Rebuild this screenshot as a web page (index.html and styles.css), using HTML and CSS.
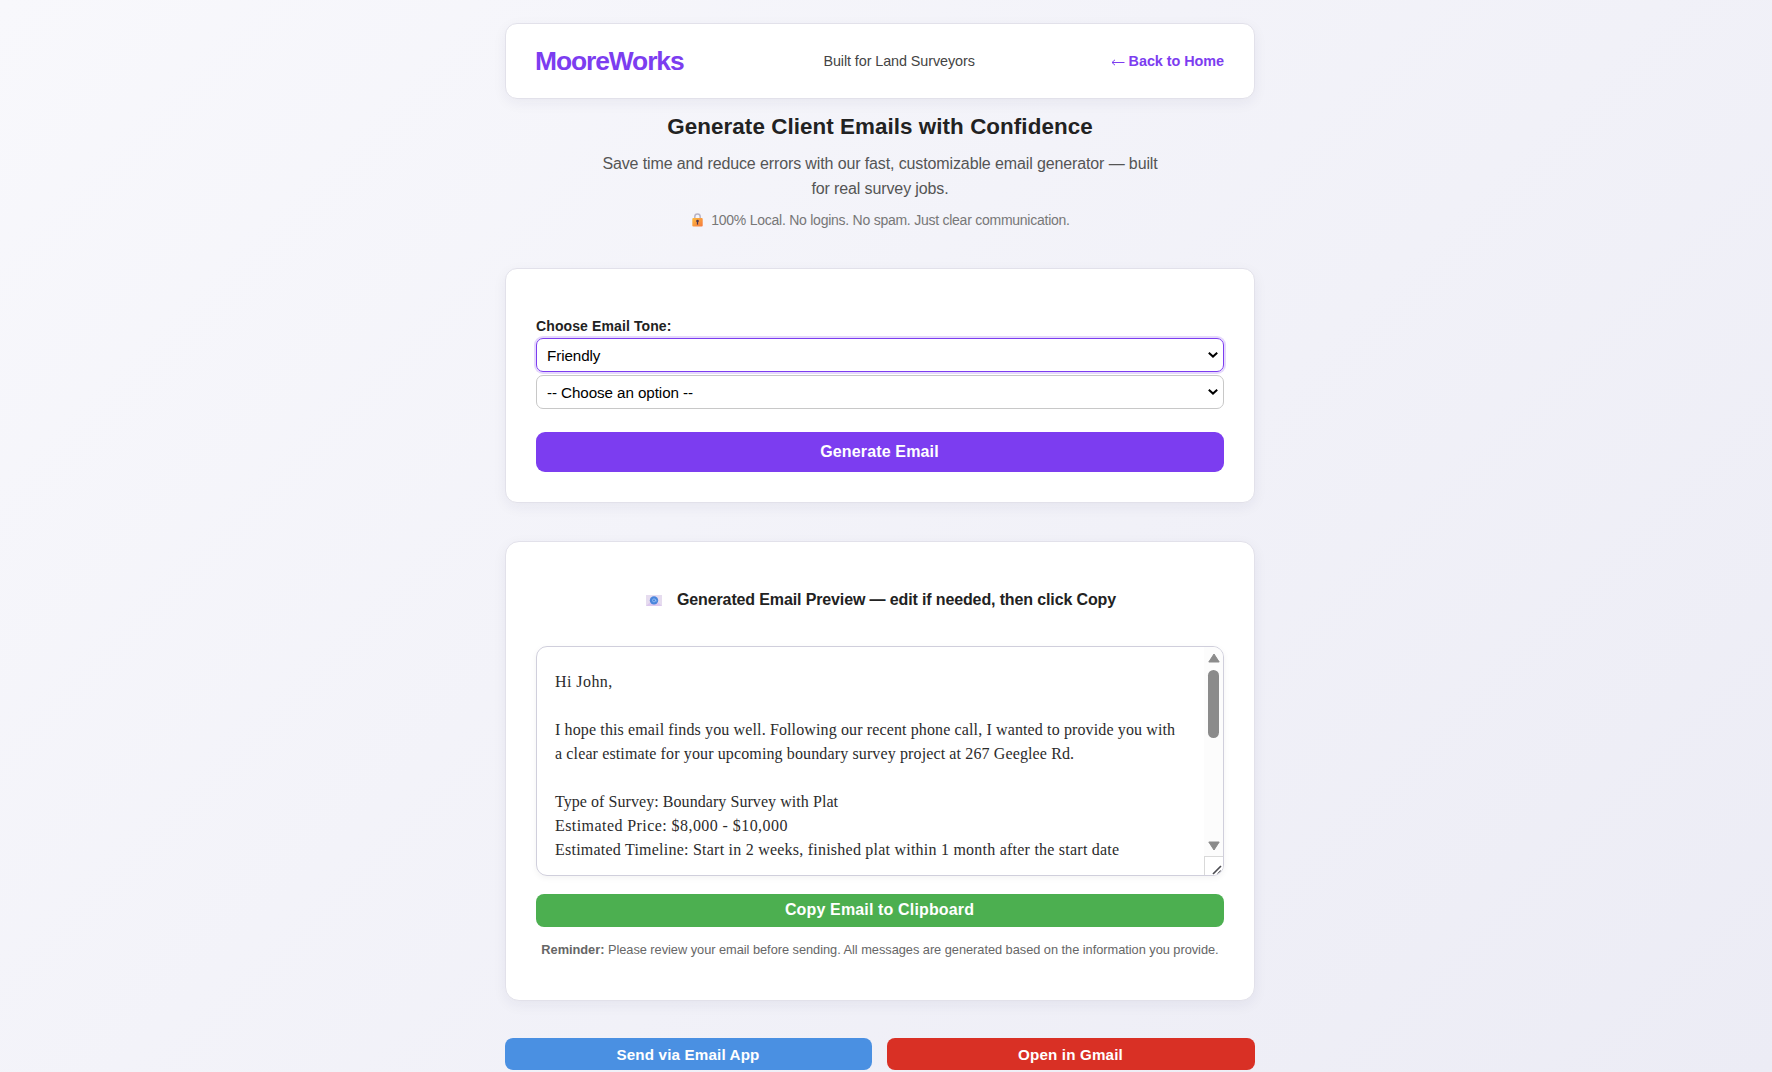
FILE: index.html
```html
<!DOCTYPE html>
<html lang="en">
<head>
<meta charset="utf-8">
<title>MooreWorks</title>
<link rel="stylesheet" href="styles.css">
</head>
<body>
<main class="page">
  <header class="card topbar">
    <div class="brand">MooreWorks</div>
    <div class="tagline">Built for Land Surveyors</div>
    <a class="back" href="#"><svg class="back-arrow" viewBox="0 0 14 7"><path d="M13.500 3.500H1M4 .8 1 3.500l3 2.700" fill="none" stroke="#7c3df0" stroke-width="1"/></svg>Back to Home</a>
  </header>
  <section class="hero">
    <h1>Generate Client Emails with Confidence</h1>
    <p class="lead">Save time and reduce errors with our fast, customizable email generator — built<br>for real survey jobs.</p>
    <p class="note">
      <svg class="lock" viewBox="0 0 11 14"><defs><linearGradient id="g" x1="0" y1="0" x2="1" y2="1"><stop offset="0" stop-color="#fdbb3f"/><stop offset="1" stop-color="#f5793f"/></linearGradient></defs><path d="M2.8 6V3.8a2.7 2.7 0 0 1 5.400 0V6" fill="none" stroke="#b9b3c4" stroke-width="1.500"/><rect x="0.300" y="5" width="10.400" height="8.600" rx="1" fill="url(#g)"/><circle cx="5.500" cy="8" r="1.300" fill="#4b3550"/><path d="M5.500 8v3.600" stroke="#4b3550" stroke-width="1.200"/></svg>
      100% Local. No logins. No spam. Just clear communication.
    </p>
  </section>
  <section class="card form">
    <label class="label">Choose Email Tone:</label>
    <div class="select focused">Friendly<svg class="chev" viewBox="0 0 10 6"><path d="M.8.8 5 4.600 9.200.8" fill="none" stroke="#000" stroke-width="2"/></svg></div>
    <div class="select">-- Choose an option --<svg class="chev" viewBox="0 0 10 6"><path d="M.8.8 5 4.600 9.200.8" fill="none" stroke="#000" stroke-width="2"/></svg></div>
    <button class="btn generate">Generate Email</button>
  </section>
  <section class="card preview">
    <h2><svg class="mail" viewBox="0 0 16 11"><rect width="16" height="11" fill="#e6dcef"/><path d="M0 11 6 5.500h4L16 11Z" fill="#dcc8ee"/><circle cx="8" cy="5.400" r="4.200" fill="#4a86dc"/><circle cx="8" cy="5.400" r="1.500" fill="none" stroke="#9cc3f5" stroke-width=".8"/><path d="M9.500 4.500v1.500q1 .8 1.300-.6" fill="none" stroke="#9cc3f5" stroke-width=".7"/></svg>Generated Email Preview — edit if needed, then click Copy</h2>
    <div class="editor">
      <div class="message"><span class="figures">Hi John,</span>

I hope this email finds you well. Following our recent phone call, I wanted to provide you with
a clear estimate for your upcoming boundary survey project at 267 Geeglee Rd.

<span class="tight">Type of Survey: Boundary Survey with Plat</span>
<span class="figures">Estimated Price: $8,000 - $10,000</span>
<span class="loose">Estimated Timeline: Start in 2 weeks, finished plat within 1 month after the start date</span></div>
      <div class="scroll">
        <svg class="arrow" viewBox="0 0 12 10"><path d="M6 1 11.200 9H.8Z" fill="#8b8b8b" stroke="#8b8b8b" stroke-linejoin="round"/></svg>
        <div class="thumb"></div>
        <svg class="arrow down" viewBox="0 0 12 10"><path d="M6 9 11.200 1H.8Z" fill="#8b8b8b" stroke="#8b8b8b" stroke-linejoin="round"/></svg>
        <div class="grip"><svg viewBox="0 0 10 10"><path d="M1 9 9 1M5.800 9 9 5.800" stroke="#4c4c52" stroke-width="1.700" fill="none"/></svg></div>
      </div>
    </div>
    <button class="btn copy">Copy Email to Clipboard</button>
    <p class="reminder"><b>Reminder:</b> Please review your email before sending. All messages are generated based on the information you provide.</p>
  </section>
  <div class="actions">
    <button class="btn send">Send via Email App</button>
    <button class="btn gmail">Open in Gmail</button>
  </div>
</main>
</body>
</html>
```

FILE: styles.css
```css
* { box-sizing: border-box; }
html { height: 100%; overflow: hidden; }
body {
  margin: 0;
  height: 1072px;
  overflow: hidden;
  padding: 23px 12px 0 0;
  font-family: "Liberation Sans", Arial, sans-serif;
  color: #222;
  background: linear-gradient(135deg, #f8f8fc, #ececf5);
}
h1, h2, p { margin: 0; }
.page { width: 750px; margin: 0 auto; }
.card {
  background: #fff;
  border: 1px solid #e2e1ea;
  border-radius: 12px;
  box-shadow: 0 4px 14px rgba(40, 30, 80, .06);
}
.topbar {
  height: 76px;
  padding: 0 30px 0 29px;
  display: flex;
  align-items: center;
  justify-content: space-between;
}
.brand { font-size: 26.4px; font-weight: 700; letter-spacing: -1.08px; color: #7c3df0; }
.tagline { margin-left: 4px; font-size: 14.4px; letter-spacing: -.09px; color: #444; }
.back { display: flex; align-items: center; gap: 4px; font-size: 14.4px; letter-spacing: -.05px; font-weight: 700; color: #7c3df0; text-decoration: none; }
.back-arrow { width: 14px; height: 7px; margin-top: 3px; }
.hero { height: 169px; text-align: center; padding-top: 14px; }
h1 { font-size: 22.4px; line-height: 28px; letter-spacing: .06px; }
.lead { margin-top: 10px; font-size: 16px; line-height: 25px; letter-spacing: -.12px; color: #555; }
.note { display: flex; align-items: center; justify-content: center; gap: 8px; margin-top: 9px; padding-left: 2px; font-size: 14px; line-height: 20px; letter-spacing: -.25px; color: #777; }
.lock { width: 11px; height: 14px; }
.form { height: 235px; padding: 48px 30px 0; }
.label { display: block; height: 21px; font-size: 14px; line-height: 19px; letter-spacing: .11px; font-weight: 700; }
.select {
  display: flex;
  align-items: center;
  justify-content: space-between;
  height: 34px;
  margin-bottom: 3px;
  padding: 0 5px 0 10px;
  border: 1px solid #c8c8c8;
  border-radius: 7px;
  font-size: 15.2px;
  letter-spacing: -.08px;
  color: #000;
}
.focused { border-color: #7c3df0; box-shadow: 0 0 0 2px #e5d8fc; }
.chev { width: 10px; height: 6px; }
.btn { display: block; width: 100%; border: 0; padding: 0 1px 0 0; border-radius: 8px; color: #fff; font: 700 16px "Liberation Sans", Arial, sans-serif; letter-spacing: .15px; }
.generate { height: 40px; margin-top: 23px; border-radius: 9px; background: #7c3df0; }
.preview { height: 460px; margin-top: 38px; padding: 46px 30px 0; border-radius: 14px; }
h2 { display: flex; align-items: center; justify-content: center; gap: 15px; padding-left: 2px; font-size: 16px; line-height: 24px; letter-spacing: -.13px; }
.mail { width: 16px; height: 11px; }
.editor { display: flex; height: 230px; margin-top: 34px; border: 1px solid #d0cfdc; border-radius: 11px; box-shadow: 0 2px 6px rgba(0, 0, 0, .05); overflow: hidden; }
.message { flex: 1; padding: 23px 0 0 18px; white-space: pre; color: #2b2b2b; font: 16px/24px Georgia, "Liberation Serif", serif; letter-spacing: .125px; }
.tight { letter-spacing: .06px; }
.loose { letter-spacing: .23px; }
.figures { letter-spacing: .43px; }
.scroll { width: 19px; display: flex; flex-direction: column; align-items: center; background: #fcfcfc; padding-top: 6px; }
.arrow { width: 12px; height: 10px; }
.thumb { width: 11px; height: 68px; margin-top: 7px; border-radius: 6px; background: #8b8b8b; }
.down { margin-top: auto; }
.grip { width: 19px; height: 19px; margin-top: 5px; padding: 8px 0 0 7px; border: 1px solid #d9d9d9; border-width: 1px 0 0 1px; background: #fff; }
.grip svg { display: block; width: 10px; height: 10px; }
.copy { height: 33px; margin-top: 18px; padding-bottom: 2px; background: #4caf50; }
.reminder { margin-top: 14px; font-size: 12.8px; line-height: 18px; letter-spacing: -.03px; color: #666; text-align: center; white-space: nowrap; }
.actions { display: grid; grid-template-columns: 367px 1fr; gap: 15px; margin-top: 37px; }
.actions .btn { height: 32px; font-size: 15.2px; }
.send { background: #4a90e2; }
.gmail { background: #d93025; }
```
